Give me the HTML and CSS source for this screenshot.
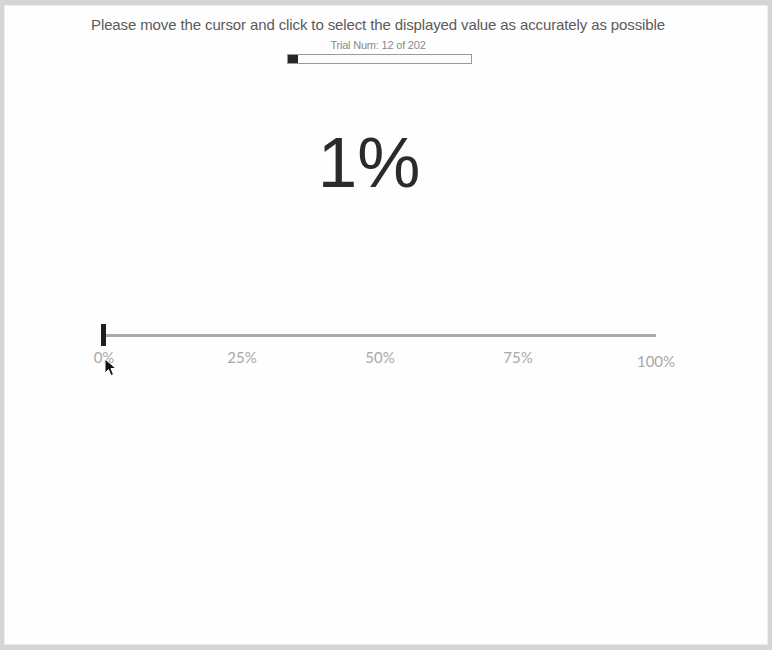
FILE: index.html
```html
<!DOCTYPE html>
<html>
<head>
<meta charset="utf-8">
<link rel="stylesheet" href="styles.css">
</head>
<body>
<div class="frame">
  <header class="head">
    <p class="instr">Please move the cursor and click to select the displayed value as accurately as possible</p>
    <p class="trial">Trial Num: 12 of 202</p>
    <div class="progress"><div class="fill" style="width: 10px"></div></div>
  </header>
  <div class="value">1%</div>
  <div class="scale">
    <div class="track">
      <div class="line"></div>
      <div class="marker"></div>
    </div>
    <div class="labels">
      <span class="tick"><span>0%</span></span>
      <span class="tick"><span>25%</span></span>
      <span class="tick"><span>50%</span></span>
      <span class="tick"><span>75%</span></span>
      <span class="tick tick-end"><span>100%</span></span>
    </div>
    <svg class="cursor" width="14" height="20" viewBox="0 0 14 20">
      <path d="M1 1 L1 15 L4.5 11.5 L7 17.5 L9.5 16.5 L7 10.5 L12 10.5 Z" fill="#111" stroke="#fff" stroke-width="1" stroke-linejoin="round"/>
    </svg>
  </div>
</div>
</body>
</html>
```
FILE: styles.css
```css
html, body {
  margin: 0;
  padding: 0;
  background: #ffffff;
}
.frame {
  box-sizing: border-box;
  width: 772px;
  height: 650px;
  border-style: solid;
  border-color: #d5d5d5;
  border-width: 5px 4px 5px 4px;
  background: #fefefe;
  box-shadow: inset 0 0 0 1px #ececec;
  display: flex;
  flex-direction: column;
}
.head {
  display: flex;
  flex-direction: column;
  align-items: center;
  padding-right: 16px;
  padding-top: 11px;
}
.instr {
  margin: 0;
  font-family: "Liberation Sans", Arial, sans-serif;
  font-size: 15px;
  line-height: 18px;
  color: #5a5a5a;
  letter-spacing: -0.12px;
}
.trial {
  margin: 5px 0 0 0;
  font-family: "Liberation Sans", Arial, sans-serif;
  font-size: 11px;
  line-height: 12px;
  color: #8a8a8a;
  letter-spacing: -0.2px;
}
.progress {
  margin-top: 3px;
  margin-left: 2px;
  box-sizing: border-box;
  width: 185px;
  height: 10px;
  border: 1px solid #9a9a9a;
  background: #fdfdfd;
  display: flex;
}
.fill {
  height: 100%;
  background: #262626;
}
.value {
  margin-top: 63px;
  padding-right: 34px;
  text-align: center;
  font-family: "Liberation Sans", Arial, sans-serif;
  font-size: 71px;
  line-height: 71px;
  color: #2b2b2b;
}
.scale {
  position: relative;
  margin-top: 126px;
  margin-left: 100px;
  width: 552px;
}
.track {
  position: relative;
  height: 22px;
  display: flex;
  align-items: center;
}
.line {
  width: 100%;
  height: 3px;
  background: #aaaaaa;
}
.marker {
  position: absolute;
  left: -3px;
  top: 0;
  width: 5px;
  height: 22px;
  background: #1e1e1e;
}
.labels {
  margin-top: 3px;
  display: flex;
  justify-content: space-between;
  align-items: flex-start;
}
.tick {
  width: 0;
  display: flex;
  justify-content: center;
  font-family: Lato, "Open Sans", sans-serif;
  font-size: 15px;
  line-height: 16px;
  color: #a8a8a8;
  white-space: nowrap;
}
.tick-end {
  margin-top: 4px;
}
.cursor {
  position: absolute;
  left: 0px;
  top: 34px;
}
```
